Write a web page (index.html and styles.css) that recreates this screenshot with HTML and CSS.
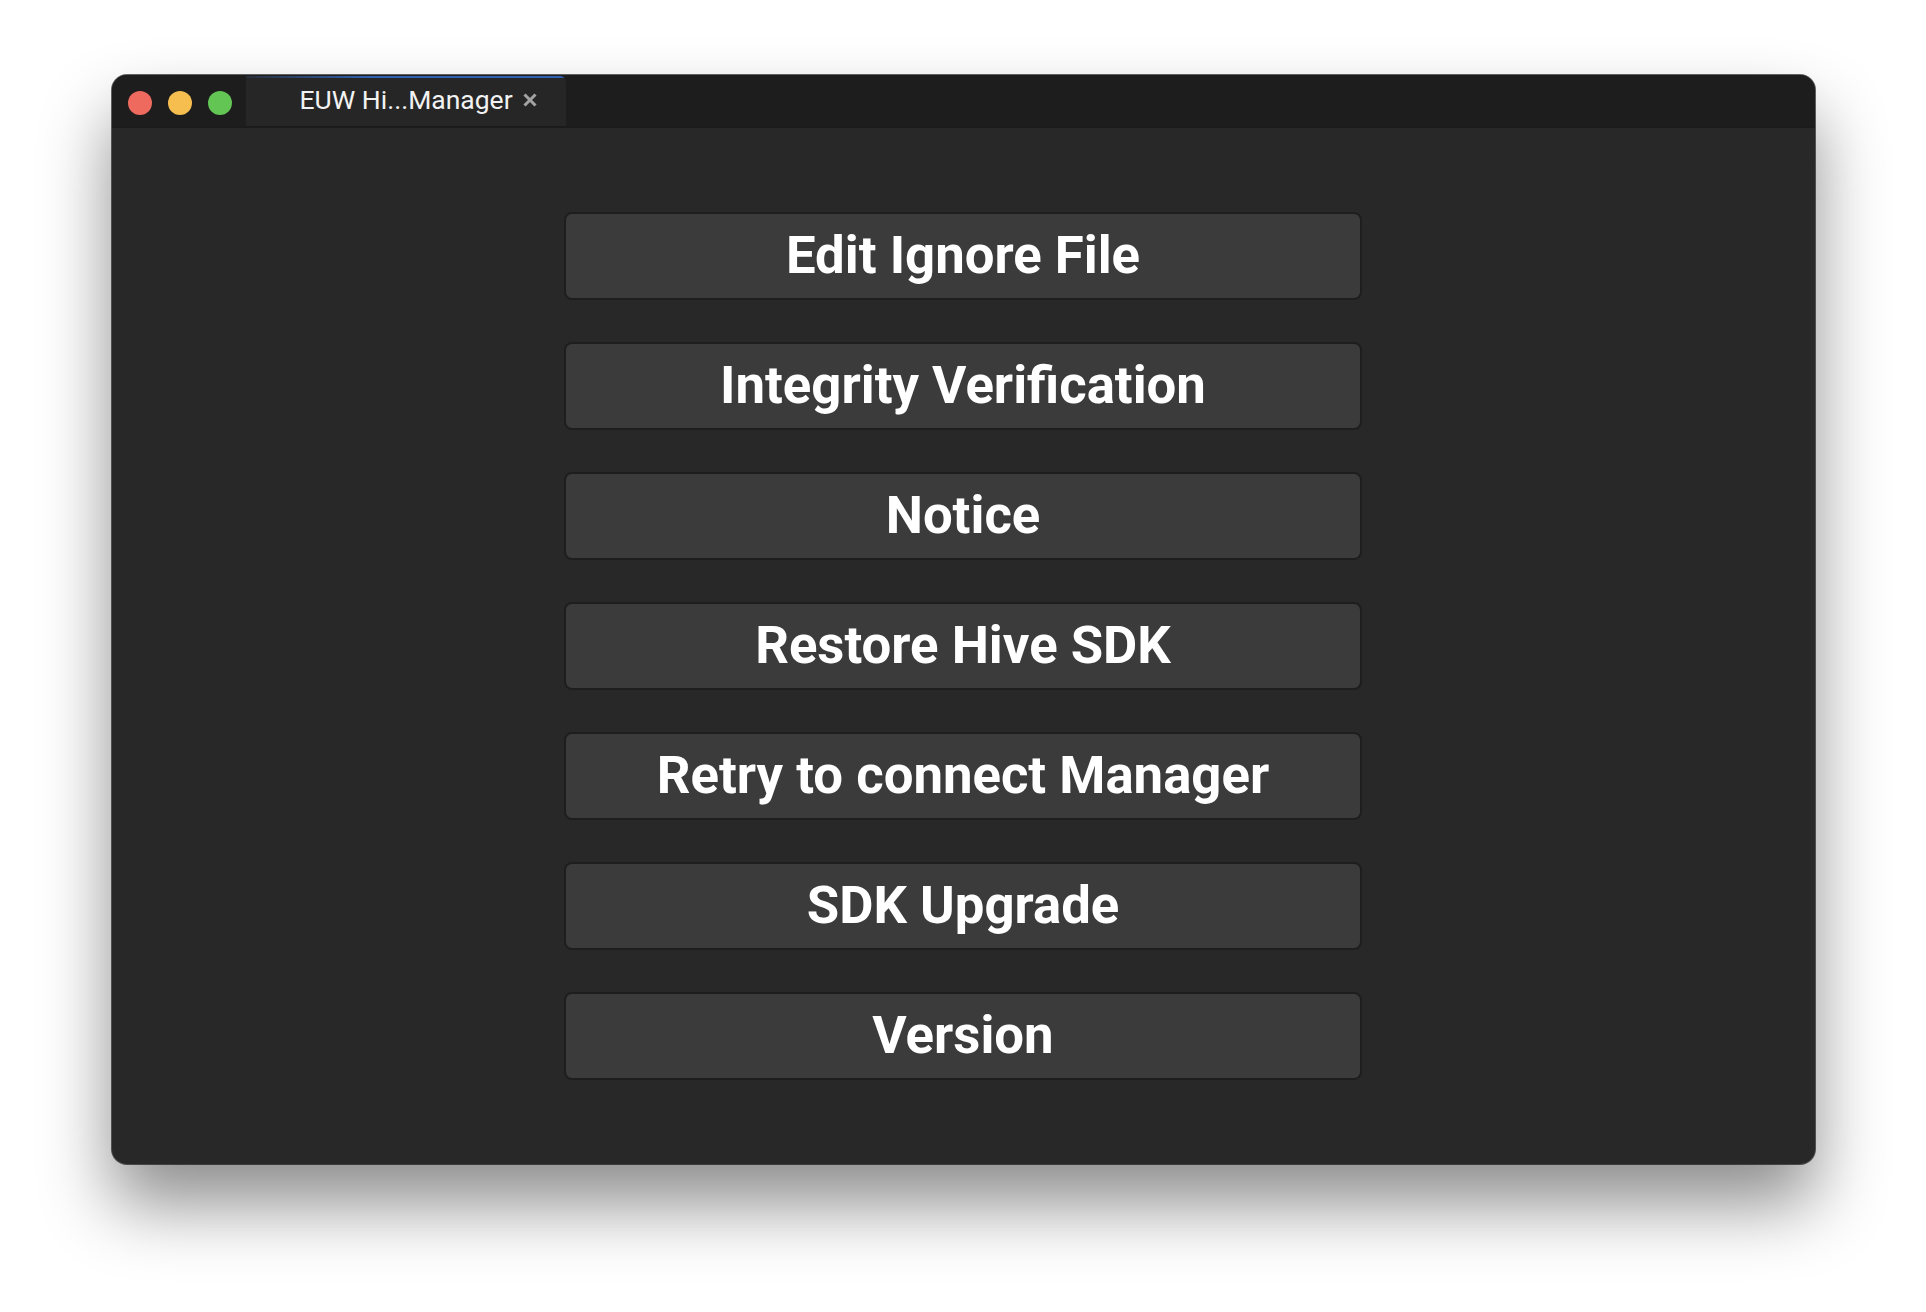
FILE: index.html
```html
<!DOCTYPE html>
<html>
<head>
<meta charset="utf-8">
<link rel="stylesheet" href="styles.css">
</head>
<body>
<div class="window">
  <div class="titlebar">
    <div class="lights">
      <span class="light red"></span>
      <span class="light yellow"></span>
      <span class="light green"></span>
    </div>
    <div class="tab">
      <span class="tab-title">EUW Hi...Manager</span>
      <svg class="tab-close" width="14" height="14" viewBox="0 0 14 14"><path d="M1.5 1.5 L12.5 12.5 M12.5 1.5 L1.5 12.5" stroke="#a3a3a3" stroke-width="3" stroke-linecap="butt" fill="none"/></svg>
    </div>
  </div>
  <div class="content">
    <button class="btn">Edit Ignore File</button>
    <button class="btn">Integrity Verification</button>
    <button class="btn">Notice</button>
    <button class="btn">Restore Hive SDK</button>
    <button class="btn">Retry to connect Manager</button>
    <button class="btn">SDK Upgrade</button>
    <button class="btn">Version</button>
  </div>
</div>
</body>
</html>
```
FILE: styles.css
```css
html, body {
  margin: 0;
  padding: 0;
  background: #ffffff;
  width: 1926px;
  height: 1312px;
  overflow: hidden;
}
.window {
  width: 1703px;
  height: 1089px;
  margin: 75px auto 0;
  box-sizing: border-box;
  border-radius: 15px;
  overflow: hidden;
  background: #282828;
  box-shadow: 0 40px 70px rgba(0, 0, 0, 0.45), 0 0 0 1px rgba(0, 0, 0, 0.6);
  display: flex;
  flex-direction: column;
  font-family: Roboto, "Liberation Sans", sans-serif;
}
.titlebar {
  height: 53px;
  flex: none;
  box-sizing: border-box;
  background: #1d1d1d;
  border-bottom: 2px solid #1b1b1b;
  display: flex;
  align-items: flex-end;
}
.lights {
  display: flex;
  gap: 16px;
  padding: 0 0 11px 16px;
  width: 118px;
  box-sizing: content-box;
}
.light {
  width: 24px;
  height: 24px;
  border-radius: 50%;
  display: block;
}
.red { background: #ee6a5f; }
.yellow { background: #f5be4f; }
.green { background: #62c554; }
.tab {
  width: 320px;
  height: 50px;
  box-sizing: border-box;
  padding: 0 0 3px 54px;
  background: linear-gradient(to right, rgba(47, 98, 179, 0.15), #2f62b3 40%) top / 100% 2px no-repeat, #262626;
  border-top-right-radius: 6px;
  display: flex;
  align-items: center;
  gap: 10px;
}
.tab-title {
  color: #f2f2f2;
  font-size: 26.5px;
  font-weight: 400;
  white-space: nowrap;
}
.tab-close {
  display: block;
  flex: none;
  margin-top: 1px;
}
.content {
  flex: 1;
  display: flex;
  flex-direction: column;
  align-items: center;
  padding-top: 84px;
  gap: 42px;
}
.btn {
  width: 798px;
  height: 88px;
  flex: none;
  box-sizing: border-box;
  background: #3b3b3b;
  border: 2px solid #1e1e1e;
  border-radius: 8px;
  color: #ffffff;
  font-family: Roboto, "Liberation Sans", sans-serif;
  font-weight: 700;
  font-size: 52.7px;
  padding: 0 0 2px;
  margin: 0;
  display: flex;
  align-items: center;
  justify-content: center;
}
```
